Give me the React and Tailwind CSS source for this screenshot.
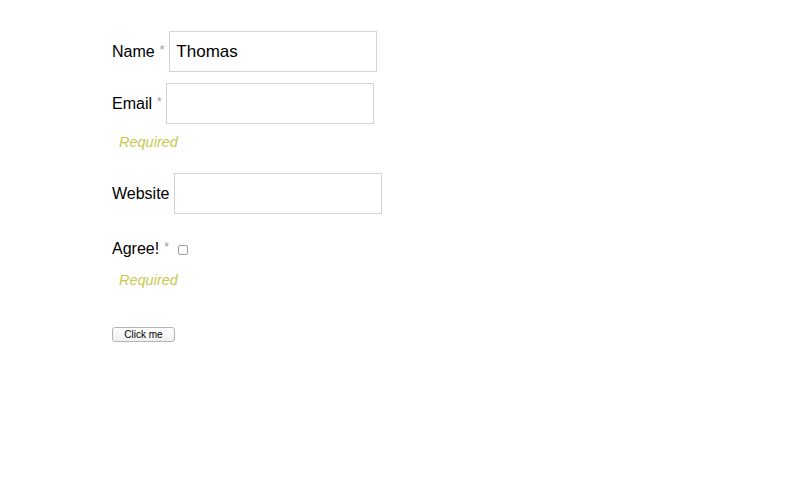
import React, { useState } from 'react';

function Asterisk() {
  return <span className="ml-[5px] text-[12px] text-[#999999] relative top-[-2px]">*</span>;
}

export default function App() {
  const [name, setName] = useState('Thomas');

  return (
    <div className="min-h-[500px] w-[800px] bg-white font-['Liberation_Sans',Arial,sans-serif] text-black">
      <form className="flex flex-col items-start pl-[112px] pt-[31px]" onSubmit={(e) => e.preventDefault()}>
        <div className="flex items-center h-[41px]">
          <label className="text-[16px] leading-none">Name</label>
          <Asterisk />
          <input
            value={name}
            onChange={(e) => setName(e.target.value)}
            className="ml-[5px] w-[208px] h-[41px] border border-[#d4d4d4] px-[6px] text-[17px] outline-none"
          />
        </div>

        <div className="flex items-center h-[41px] mt-[11px]">
          <label className="text-[16px] leading-none">Email</label>
          <Asterisk />
          <input className="ml-[4px] w-[208px] h-[41px] border border-[#d4d4d4] px-[6px] text-[17px] outline-none" />
        </div>
        <div className="mt-[9px] ml-[7px] h-[18px] text-[14.5px] leading-[18px] italic text-[#c9c94e]">Required</div>

        <div className="flex items-center h-[41px] mt-[22px]">
          <label className="text-[16px] leading-none">Website</label>
          <input className="ml-[4px] w-[208px] h-[41px] border border-[#d4d4d4] px-[6px] text-[17px] outline-none" />
        </div>

        <div className="flex items-center h-[18px] mt-[26px]">
          <label className="text-[16px] leading-none">Agree!</label>
          <Asterisk />
          <span className="ml-[9px] mt-[2px] w-[10px] h-[10px] rounded-[2px] border border-[#a0a0a0] bg-white" />
        </div>
        <div className="mt-[13px] ml-[7px] h-[18px] text-[14.5px] leading-[18px] italic text-[#c9c94e]">Required</div>

        <button
          type="submit"
          className="mt-[38px] w-[63px] h-[15px] rounded-[3px] border border-[#b4b4b4] bg-gradient-to-b from-white to-[#f0f0f0] text-[10px] leading-none text-black"
        >
          Click me
        </button>
      </form>
    </div>
  );
}
